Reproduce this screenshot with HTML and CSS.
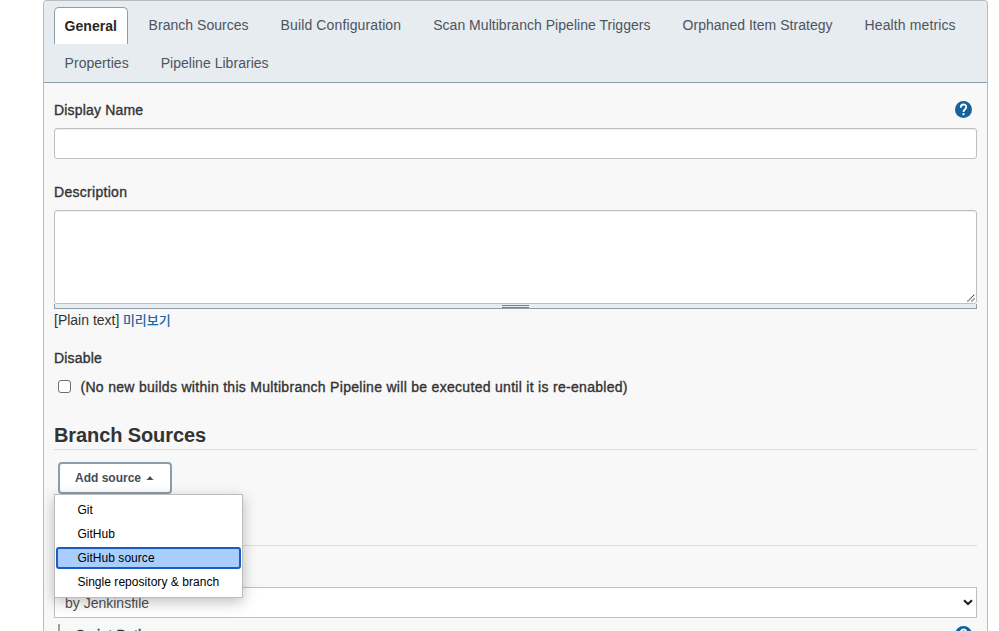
FILE: index.html
```html
<!DOCTYPE html>
<html lang="ko">
<head>
<meta charset="utf-8">
<title>Multibranch Pipeline Config</title>
<link rel="stylesheet" href="styles.css">
</head>
<body>
<main class="panel">
  <nav class="tabs">
    <a class="tab active">General</a>
    <a class="tab">Branch Sources</a>
    <a class="tab wide">Build Configuration</a>
    <a class="tab">Scan Multibranch Pipeline Triggers</a>
    <a class="tab">Orphaned Item Strategy</a>
    <a class="tab wide">Health metrics</a>
    <a class="tab">Properties</a>
    <a class="tab">Pipeline Libraries</a>
  </nav>
  <form class="content">
    <div class="label-row name-row">
      <span class="label">Display Name</span>
      <svg class="help" viewBox="0 0 24 24"><circle cx="12" cy="12" r="12" fill="#14629b"/><path d="M8.1 9.4C8.1 3.4 16.1 3.7 15.9 8.8C15.7 11.5 12 12 12 15.4" fill="none" stroke="#fff" stroke-width="2.6"/><rect x="10.6" y="17.2" width="2.8" height="2.8" fill="#fff"/></svg>
    </div>
    <div class="input"></div>
    <div class="label-row description-row"><span class="label spaced">Description</span></div>
    <div class="textarea">
      <svg class="grip" viewBox="0 0 8 8"><path d="M0.5 7.5L7.5 0.5M4.5 7.5L7.5 4.5" stroke="#444" stroke-width="1.1" stroke-dasharray="1.2 0.4"/></svg>
    </div>
    <div class="resize-handle"><span class="handle-lines"></span></div>
    <div class="format"><span class="plain">[Plain text]</span><a class="preview">미리보기</a></div>
    <div class="label-row disable-row"><span class="label">Disable</span></div>
    <div class="check-row"><span class="checkbox"></span><span class="label spaced check-label">(No new builds within this Multibranch Pipeline will be executed until it is re-enabled)</span></div>
    <h2 class="section">Branch Sources</h2>
    <div class="source-area">
      <div class="add-button"><span>Add source</span><svg class="caret" viewBox="0 0 8 4"><path d="M0 4Q2 3 4 0Q6 3 8 4Z" fill="#454c57"/></svg></div>
      <div class="menu">
        <div class="item">Git</div>
        <div class="item">GitHub</div>
        <div class="item selected">GitHub source</div>
        <div class="item">Single repository &amp; branch</div>
      </div>
    </div>
    <div class="select"><span>by Jenkinsfile</span><svg class="chevron" viewBox="0 0 10 7"><path d="M1 1.2L5 5L9 1.2" fill="none" stroke="#222" stroke-width="2.1"/></svg></div>
    <div class="script-row">
      <span class="label script-label">Script Path</span>
      <svg class="help" viewBox="0 0 24 24"><circle cx="12" cy="12" r="12" fill="#14629b"/><path d="M8.1 9.4C8.1 3.4 16.1 3.7 15.9 8.8C15.7 11.5 12 12 12 15.4" fill="none" stroke="#fff" stroke-width="2.6"/></svg>
    </div>
  </form>
</main>
</body>
</html>
```
FILE: styles.css
```css
* { box-sizing: border-box; }
html { overflow: hidden; height: 631px; }
body {
  margin: 0;
  height: 631px;
  overflow: hidden;
  background: #fff;
  color: #333;
  font: 14px/20px "Liberation Sans", "Noto Sans CJK KR", sans-serif;
}
.panel {
  width: 945px;
  height: 631px;
  margin-left: 43px;
  overflow: hidden;
  border: 1px solid #bbb;
  border-bottom: 0;
  border-radius: 4px 4px 0 0;
  background: #f8f8f8;
}
.tabs {
  display: flex;
  flex-wrap: wrap;
  align-content: flex-start;
  column-gap: 10px;
  height: 82px;
  padding: 6px 0 0 10px;
  background: #e7ecf0;
  border-bottom: 1px solid #8c9eaa;
  border-radius: 3px 3px 0 0;
}
.tab {
  height: 38px;
  padding: 7px 10.4px 0 9.6px;
  border: 1px solid transparent;
  color: #4d545d;
  line-height: 21px;
  letter-spacing: 0.03px;
  white-space: nowrap;
}
.tab.wide { letter-spacing: 0.12px; }
.tab.active {
  width: 74px;
  height: 37px;
  padding: 8px 0 0 9.6px;
  background: #fff;
  border-color: #8c9eaa;
  border-bottom: 0;
  border-radius: 5px 5px 0 0;
  color: #282828;
  font-weight: bold;
}
.content { padding: 0 10px; }
.label { letter-spacing: 0.18px; -webkit-text-stroke: 0.35px #333; }
.label.spaced { letter-spacing: 0.295px; }
.label-row { display: flex; justify-content: space-between; }
.name-row { height: 45px; padding: 17px 5.5px 0 0; }
.help { width: 17px; height: 17px; margin-top: 0.5px; }
.input {
  height: 31px;
  background: #fff;
  border: 1px solid #bfbfbf;
  border-radius: 3px;
  box-shadow: inset 0 1px 1px rgba(0,0,0,.07);
}
.description-row { height: 51px; padding-top: 23px; }
.textarea {
  display: flex;
  justify-content: flex-end;
  align-items: flex-end;
  height: 94px;
  background: #fff;
  border: 1px solid #bfbfbf;
  border-radius: 3px;
  box-shadow: inset 0 1px 1px rgba(0,0,0,.07);
}
.grip { width: 8px; height: 8px; margin: 0 1px 1px 0; }
.resize-handle {
  display: flex;
  justify-content: center;
  height: 5px;
  background: #e7ecf0;
  border: 1px solid #8c9eaa;
  border-top: 0;
}
.handle-lines { width: 27px; height: 3px; margin-top: 1px; border: solid #77848a; border-width: 1px 0; }
.format { display: flex; height: 39px; padding-top: 1px; }
.preview {
  margin-left: 3.5px;
  color: #1769a5;
  font: 500 13px/20px "Noto Sans CJK KR", sans-serif;
}
.disable-row { height: 29px; }
.check-row { display: flex; height: 36px; padding: 0 0 0 4px; }
.checkbox { width: 13px; height: 13px; margin-top: 3px; background: #fff; border: 1px solid #6f6f6f; border-radius: 3px; }
.check-label { margin-left: 9.5px; }
.section {
  height: 37px;
  margin: 0;
  padding-top: 10px;
  border-bottom: 1px solid #ddd;
  color: #333;
  font-size: 20px;
  line-height: 24px;
  letter-spacing: -0.1px;
}
.source-area {
  position: relative;
  height: 96px;
  margin-bottom: 41px;
  padding: 12px 0 0 4px;
  border-bottom: 1px solid #ddd;
}
.add-button {
  display: flex;
  align-items: center;
  width: 114px;
  height: 32px;
  padding-left: 15px;
  border: 2px solid #8c9eaa;
  border-radius: 4px;
  background: #fff;
  color: #454c57;
  font-size: 12px;
  font-weight: bold;
}
.caret { width: 8px; height: 4px; margin-left: 5px; }
.menu {
  position: absolute;
  top: 44px;
  left: 0;
  width: 189px;
  height: 104px;
  padding: 4px 1px;
  background: #fff;
  border: 1px solid #bbb;
  box-shadow: 0 4px 13px rgba(0,0,0,.25);
  color: #000;
  font-size: 12px;
  letter-spacing: 0.04px;
}
.item { height: 22px; margin-bottom: 2px; padding-left: 21.4px; line-height: 22px; white-space: nowrap; }
.item.selected { padding-left: 19.4px; background: #a9cefd; border: 2px solid #1a5bc4; border-radius: 3px; line-height: 18px; }
.select {
  display: flex;
  justify-content: space-between;
  align-items: center;
  height: 31px;
  padding: 1px 3px 0 10px;
  border: 1px solid #bfbfbf;
  background: #fff;
  color: #505050;
}
.chevron { width: 10px; height: 7px; margin-top: -2px; }
.script-row { display: flex; justify-content: space-between; height: 7px; margin: 6px 0 0 4px; padding-right: 5.5px; border-left: 2px solid #a0a0a0; }
.script-label { margin: 1px 0 0 15.5px; }
.script-row .help { flex: none; margin-top: 1.5px; }
```
